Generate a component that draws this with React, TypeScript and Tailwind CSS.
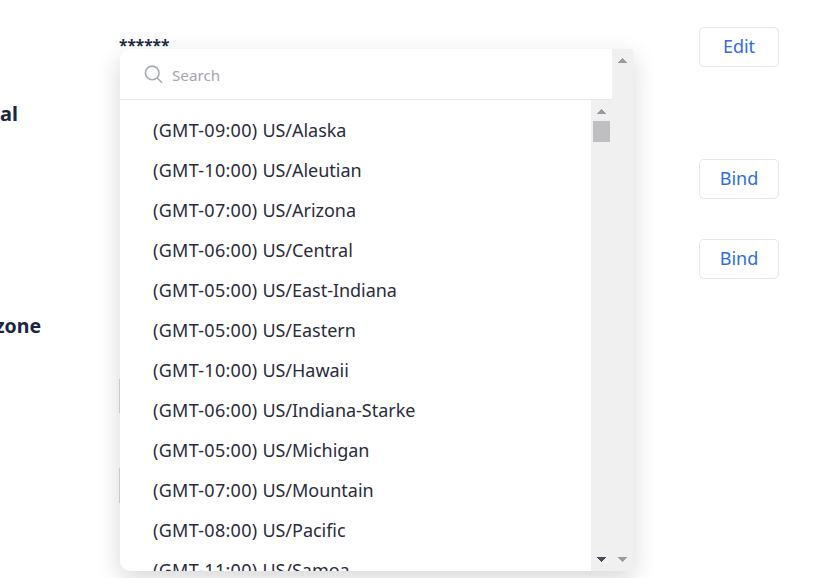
const zones = [
  { offset: "-09:00", name: "US/Alaska" },
  { offset: "-10:00", name: "US/Aleutian" },
  { offset: "-07:00", name: "US/Arizona" },
  { offset: "-06:00", name: "US/Central" },
  { offset: "-05:00", name: "US/East-Indiana" },
  { offset: "-05:00", name: "US/Eastern" },
  { offset: "-10:00", name: "US/Hawaii" },
  { offset: "-06:00", name: "US/Indiana-Starke" },
  { offset: "-05:00", name: "US/Michigan" },
  { offset: "-07:00", name: "US/Mountain" },
  { offset: "-08:00", name: "US/Pacific" },
  { offset: "-11:00", name: "US/Samoa" },
];

function Arrow({ down = false, className }: { down?: boolean; className: string }) {
  return (
    <svg
      viewBox="0 0 9 5"
      className={`h-[5px] w-[9px] ${className}`}
      fill="currentColor"
      shapeRendering="crispEdges"
    >
      <path d={down ? "M0 0H9L4.5 5Z" : "M0 5H9L4.5 0Z"} />
    </svg>
  );
}

function ActionButton({ label }: { label: string }) {
  return (
    <button
      type="button"
      className="flex h-10 w-20 items-center justify-center rounded-[5px] border border-[#e5e6ee] bg-white pb-0.5 text-[18px] leading-none text-[#2f6be4]"
    >
      {label}
    </button>
  );
}

/* Timezone picker, floats over the settings rows. Both scroll areas keep their tracks visible. */
function TimezoneMenu() {
  return (
    <div className="absolute left-[120px] top-[49px] flex h-[522px] w-[513px] overflow-hidden rounded-l-[10px] rounded-r-[2px] bg-white shadow-[0_8px_24px_rgba(0,0,0,0.16)]">
      <div className="flex w-[492px] flex-col">
        <div className="flex h-[51px] flex-none items-center border-b border-[#e5e6ee] pl-6">
          <svg
            viewBox="0 0 20 20"
            className="mt-0.5 h-5 w-5 text-[#a6abb5]"
            fill="none"
            stroke="currentColor"
            strokeWidth="1.6"
          >
            <circle cx="8.2" cy="7.9" r="6.8" />
            <path d="M13 12.8L18 17.8" />
          </svg>
          <span className="ml-2 pt-0.5 text-[15.2px] text-[#a3a5ad]">Search</span>
        </div>
        <div className="flex min-h-0 flex-1">
          <ul className="flex-1 overflow-hidden pt-[10px]">
            {zones.map((zone) => (
              <li
                key={zone.name}
                className="h-10 whitespace-nowrap pl-[33px] text-[18px] leading-10 text-[#292b3b]"
              >
                <span className="tracking-[0.28px]">(GMT{zone.offset}) </span>
                <span className="tracking-[-0.03px]">{zone.name}</span>
              </li>
            ))}
          </ul>
          <div className="flex w-[21px] flex-col items-center bg-[#f0f0f0] pb-[9px] pt-[9px]">
            <Arrow className="text-[#989ba3]" />
            <div className="mt-[7px] h-[21px] w-[17px] bg-[#bfbfc1]" />
            <Arrow down className="mt-auto text-[#484b58]" />
          </div>
        </div>
      </div>
      <div className="flex w-[21px] flex-col items-center justify-between bg-[#f0f0f0] py-[9px]">
        <Arrow className="text-[#989ba3]" />
        <Arrow down className="text-[#989ba3]" />
      </div>
    </div>
  );
}

export default function App() {
  return (
    <div className="relative flex h-[578px] w-[829px] overflow-hidden bg-white font-['Noto_Sans','Open_Sans',sans-serif]">
      <div className="flex w-[119px] flex-none flex-col pt-[99px] text-[20px] font-bold leading-[30px] text-[#1b2640]">
        <div>al</div>
        <div className="-ml-[5px] mt-[182px] text-[19.5px]">zone</div>
      </div>
      <div className="flex w-[580px] flex-col">
        <div className="mt-[29px] h-8 text-[15.5px] font-bold leading-8 text-[#1b2640]">******</div>
        <div className="mt-[318px] h-[34px] w-40 border-l border-[#d9d9dc]" />
        <div className="mt-[55px] h-[35px] w-40 border-l border-[#d9d9dc]" />
      </div>
      <div className="flex flex-col pt-[27px]">
        <ActionButton label="Edit" />
        <div className="mt-[92px] flex flex-col gap-10">
          <ActionButton label="Bind" />
          <ActionButton label="Bind" />
        </div>
      </div>
      <TimezoneMenu />
    </div>
  );
}
